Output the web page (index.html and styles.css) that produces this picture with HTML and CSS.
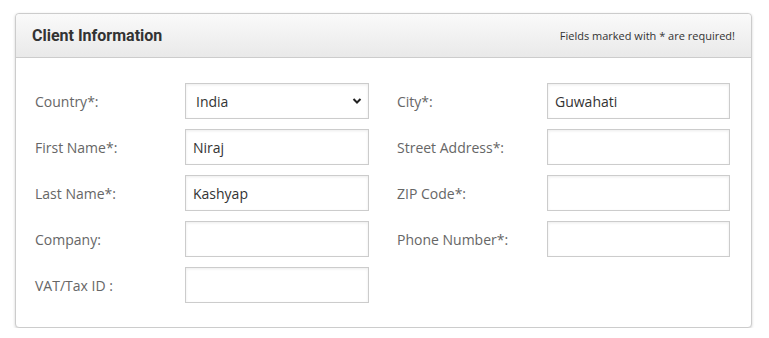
FILE: index.html
```html
<!DOCTYPE html>
<html lang="en">
<head>
    <meta charset="UTF-8">
    <title>Client Information</title>
    <link rel="stylesheet" href="styles.css">
</head>
<body>
    <div class="panel">
        <div class="panel-heading">
            <h3>Client Information</h3>
            <span class="note">Fields marked with * are required!</span>
        </div>
        <form class="panel-body">
            <div class="col">
                <label for="country">Country*:</label>
                <div class="select-wrap">
                    <select id="country">
                        <option>India</option>
                    </select>
                    <svg class="caret" width="10" height="8" viewBox="0 0 10 8">
                        <path d="M1.5 2 L5 5.5 L8.5 2" fill="none" stroke="#222" stroke-width="2"/>
                    </svg>
                </div>

                <label for="firstName">First Name*:</label>
                <input type="text" id="firstName" value="Niraj">

                <label for="lastName">Last Name*:</label>
                <input type="text" id="lastName" value="Kashyap">

                <label for="company">Company:</label>
                <input type="text" id="company">

                <label for="vat">VAT/Tax ID :</label>
                <input type="text" id="vat">
            </div>
            <div class="col">
                <label for="city">City*:</label>
                <input type="text" id="city" value="Guwahati">

                <label for="street">Street Address*:</label>
                <input type="text" id="street">

                <label for="zip">ZIP Code*:</label>
                <input type="text" id="zip">

                <label for="phone">Phone Number*:</label>
                <input type="text" id="phone">
            </div>
        </form>
    </div>
</body>
</html>
```

FILE: styles.css
```css
body {
    margin: 0;
    padding: 13px 17px 0 15px;
    background: #fff;
    font-family: "Open Sans", Arial, sans-serif;
    color: #333;
}

.panel {
    border: 1px solid #ccc;
    border-radius: 4px;
    box-shadow: 0 1px 3px rgba(0, 0, 0, 0.18);
    background: #fff;
}

.panel-heading {
    display: flex;
    justify-content: space-between;
    align-items: center;
    height: 43px;
    padding: 0 16px;
    background: linear-gradient(#fafafa, #e9e9e9);
    border-bottom: 1px solid #ccc;
    border-radius: 4px 4px 0 0;
}

.panel-heading h3 {
    margin: 0;
    font-family: Roboto, Arial, sans-serif;
    font-size: 16px;
    font-weight: 700;
    color: #333;
}

.note {
    font-size: 11px;
    color: #333;
}

.panel-body {
    display: flex;
    gap: 28px;
    padding: 25px 21px 24px 19px;
    margin: 0;
}

.col {
    display: grid;
    grid-template-columns: 150px 184px;
    grid-auto-rows: 36px;
    row-gap: 10px;
    align-items: center;
    align-content: start;
}

.col + .col {
    grid-template-columns: 150px 183px;
}

label {
    font-size: 14px;
    color: #666;
}

input[type="text"], select {
    box-sizing: border-box;
    width: 100%;
    height: 36px;
    padding: 0 7px;
    border: 1px solid #ccc;
    border-radius: 0;
    background: #fff;
    box-shadow: inset 0 1px 3px rgba(0, 0, 0, 0.08);
    font-family: "Open Sans", Arial, sans-serif;
    font-size: 14px;
    color: #333;
    outline: none;
}

.select-wrap {
    position: relative;
    height: 36px;
}

select {
    appearance: none;
    -webkit-appearance: none;
    padding-left: 10px;
}

.caret {
    position: absolute;
    right: 7px;
    top: 14px;
    pointer-events: none;
}
```
